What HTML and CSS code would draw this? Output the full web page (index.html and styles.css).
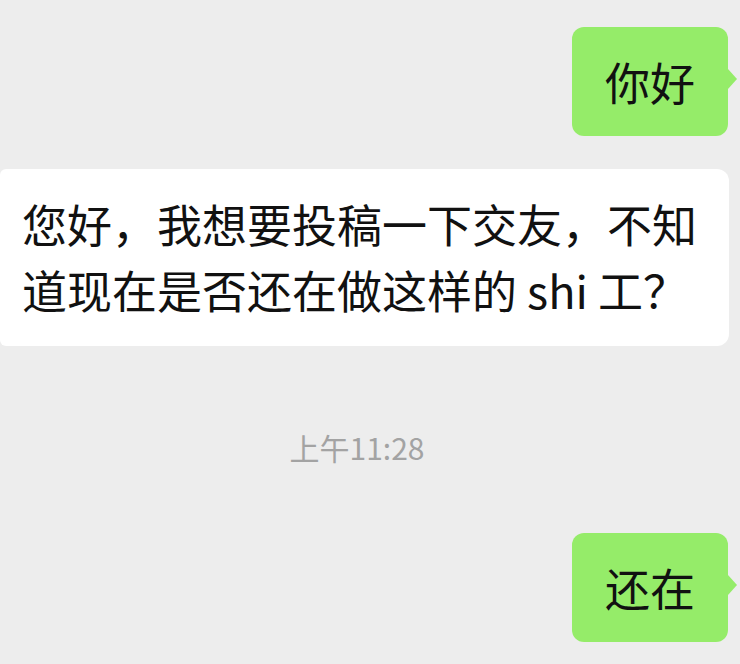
FILE: index.html
```html
<!DOCTYPE html>
<html lang="zh-CN">
<head>
    <meta charset="UTF-8">
    <meta name="viewport" content="width=device-width, initial-scale=1.0">
    <title>聊天</title>
    <link rel="stylesheet" href="styles.css">
</head>
<body>
    <div class="chat">
        <div class="row mine first">
            <div class="bubble green">你好</div>
        </div>
        <div class="row theirs">
            <div class="bubble white">您好，我想要投稿一下交友，不知道现在是否还在做这样的 shi 工？</div>
        </div>
        <div class="time">上午11:28</div>
        <div class="row mine">
            <div class="bubble green">还在</div>
        </div>
    </div>
</body>
</html>
```

FILE: styles.css
```css
body {
    margin: 0;
    padding: 0;
    background-color: #ededed;
    font-family: "Noto Sans CJK SC", "Noto Sans", sans-serif;
    color: #111;
}

.chat {
    display: flex;
    flex-direction: column;
    width: 740px;
    height: 664px;
    overflow: hidden;
}

.row {
    display: flex;
}

.row.mine {
    justify-content: flex-end;
    padding-right: 12px;
}

.row.first {
    margin-top: 27px;
}

.row.theirs {
    margin-top: 33px;
}

.bubble {
    position: relative;
    font-size: 45px;
    border-radius: 12px;
}

.bubble.green {
    background-color: #95ec69;
    padding: 22px 33px;
    line-height: 65px;
    height: 65px;
}

.bubble.green::after {
    content: "";
    position: absolute;
    right: -9px;
    top: 42px;
    border-top: 10px solid transparent;
    border-bottom: 10px solid transparent;
    border-left: 9px solid #95ec69;
}

.bubble.white {
    background-color: #fff;
    width: 680px;
    padding: 22px 27px 23px 22px;
    line-height: 66px;
    border-radius: 6px 12px 12px 6px;
}

.time {
    margin-top: 81px;
    padding-right: 26px;
    text-align: center;
    font-size: 30px;
    line-height: 40px;
    color: #a3a3a3;
}

.time + .row {
    margin-top: 66px;
}
```
